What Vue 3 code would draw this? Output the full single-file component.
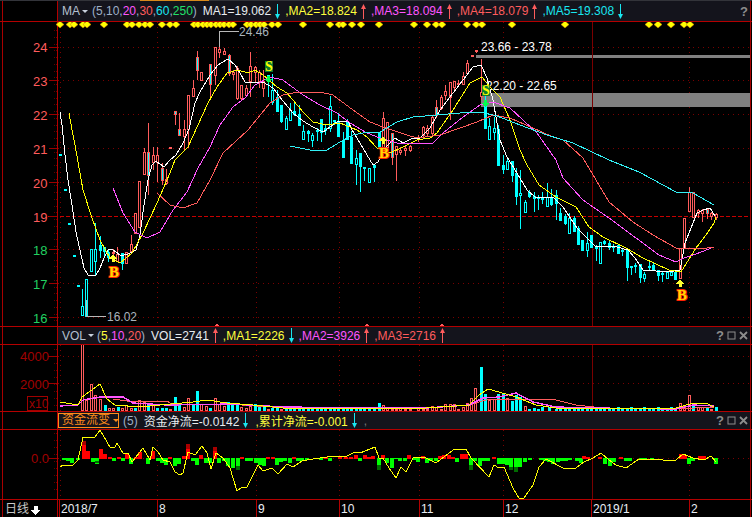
<template>
  <div class="terminal">
    <div class="topstrip"><span class="tab"></span></div>

    <!-- K线 -->
    <div class="head head-main">
      <div class="gutter"></div>
      <div class="head-body">
        <span class="name">MA</span><i class="drop"></i>
        <span class="params">(5,10,<b class="c-pink">20</b>,<b class="c-red">30</b>,<b class="c-cyan">60</b>,<b class="c-green">250</b>)</span>
        <template v-for="m in maItems" :key="m.text">
          <span :class="['val', m.color]">{{ m.text }}</span>
          <svg :class="['arrow', m.up ? 'c-red' : 'c-cyan down']" width="7" height="15" viewBox="0 0 7 15"><path d="M3 15V3H4V15ZM3.5 0L6 5H1Z" /></svg>
        </template>
        <span class="tools"><span class="help">?</span></span>
      </div>
    </div>
    <div class="rule"></div>
    <div class="pane">
      <svg class="chart" width="747" height="304" viewBox="3 22 747 304">
        <line v-for="y in priceGrid" :key="y" class="grid" x1="58" x2="750" :y1="y" :y2="y" />
        <line v-for="x in monthLines" :key="x" class="grid" :x1="x" :x2="x" y1="22" y2="326" />
        <rect class="zone" x="476" y="55" width="274" height="3" />
        <rect class="zone" x="481" y="93" width="269" height="14" />
        <line class="month-solid" x1="592.5" x2="592.5" y1="22" y2="326" />
        <line class="last-price" x1="48" x2="750" y1="216.5" y2="216.5" />
        <line class="axis" x1="57.5" x2="57.5" y1="22" y2="326" />
        <line v-for="y in priceTicks" :key="y" class="tick-minor" x1="54" x2="57" :y1="y" :y2="y" />
        <line v-for="p in priceLabels" :key="p.text" class="tick" x1="49" x2="57" :y1="p.y" :y2="p.y" />
        <text v-for="p in priceLabels" :key="p.text" :class="['axis-text', p.color]" x="33" :y="p.y + 5">{{ p.text }}</text>

        <g v-for="(c, i) in candles" :key="i" :class="['candle', 'k-' + c[5]]">
          <line :x1="c[0] + 0.5" :x2="c[0] + 0.5" :y1="c[1]" :y2="c[4]" />
          <rect :x="c[0] - 0.5" :y="c[2] + 0.5" width="2" :height="Math.max(c[3] - c[2], 1)" />
        </g>

        <polyline class="ma white" :points="ma1" />
        <polyline class="ma yellow" :points="ma2" />
        <polyline class="ma pink" :points="ma3" />
        <polyline class="ma salmon" :points="ma4" />
        <polyline class="ma cyan" :points="ma5" />

        <path v-for="x in diamonds" :key="x" class="diamond" :d="`M${x - 4} 24.5L${x} 21L${x + 4} 24.5L${x} 28Z`" />

        <polyline class="leader" points="219,47 219,31.5 239,31.5" />
        <polyline class="leader" points="86,300 86,316.5 106,316.5" />
        <text class="note" x="239" y="36">24.46</text>
        <text class="note" x="107" y="321">16.02</text>
        <text class="zone-text" x="481" y="51">23.66 - 23.78</text>
        <text class="zone-text" x="486" y="90">22.20 - 22.65</text>

        <g v-for="s in sells" :key="s.x">
          <rect class="sell-bg" :x="s.x - 4" :y="s.y" width="8" height="11" />
          <text class="sell" :x="s.x" :y="s.y + 10" text-anchor="middle">S</text>
          <path class="sell-arrow" :transform="`translate(${s.ax} ${s.ay})`" d="M-1.5 0H1.5V3H4L0 7L-4 3H-1.5Z" />
        </g>
        <g v-for="b in buys" :key="b.x">
          <path class="buy-arrow" :transform="`translate(${b.ax} ${b.ay})`" d="M0 0L4 3.5H1.5V6.5H-1.5V3.5H-4Z" />
          <text class="buy" :x="b.x" :y="b.y" text-anchor="middle">B</text>
        </g>

        <path v-for="x in [217, 367, 442]" :key="x" class="bottom-mark" :d="`M${x - 2} 326L${x} 323L${x + 2} 326Z`" />
      </svg>
    </div>
    <div class="rule"></div>

    <!-- 成交量 -->
    <div class="head">
      <div class="gutter"></div>
      <div class="head-body">
        <span class="name">VOL</span><i class="drop"></i>
        <span class="params vol-params">(<b class="c-yellow">5</b>,<b class="c-pink">10</b>,<b class="c-red">20</b>)</span>
        <template v-for="m in volItems" :key="m.text">
          <span :class="['val', m.color]">{{ m.text }}</span>
          <svg :class="['arrow', m.up ? 'c-red' : 'c-cyan down']" width="7" height="15" viewBox="0 0 7 15"><path d="M3 15V3H4V15ZM3.5 0L6 5H1Z" /></svg>
        </template>
        <span class="tools">
          <span class="help">?</span>
          <svg width="9" height="9" viewBox="0 0 9 9"><rect x="1" y="1" width="7" height="7" class="tool-box" /></svg>
          <svg width="9" height="9" viewBox="0 0 9 9"><path d="M1 1L8 8M8 1L1 8" class="tool-x" /></svg>
        </span>
      </div>
    </div>
    <div class="rule"></div>
    <div class="pane">
      <svg class="chart" width="747" height="66" viewBox="3 345 747 66">
        <line v-for="y in [356, 383]" :key="y" class="grid" x1="58" x2="750" :y1="y + 0.5" :y2="y + 0.5" />
        <line v-for="x in monthLines" :key="x" class="grid" :x1="x" :x2="x" y1="345" y2="411" />
        <line class="month-solid" x1="592.5" x2="592.5" y1="345" y2="411" />
        <line class="axis" x1="57.5" x2="57.5" y1="345" y2="411" />
        <line v-for="y in volTicks" :key="y" class="tick-minor" x1="54" x2="57" :y1="y" :y2="y" />
        <line class="tick" x1="48" x2="57" y1="356.5" y2="356.5" />
        <line class="tick" x1="48" x2="57" y1="383.5" y2="383.5" />
        <text class="axis-text dark" x="20" y="361">4000</text>
        <text class="axis-text dark" x="20" y="389">2000</text>
        <rect class="x10-box" x="27.5" y="396.5" width="20" height="14" />
        <text class="axis-text dark small" x="29" y="408">x10</text>

        <rect v-for="(b, i) in volBars" :key="i" :class="'vol-' + b[2]" :x="b[0] - 0.5" :y="b[1] + 0.5" width="2" :height="410 - b[1]" />

        <polyline class="ma salmon" :points="volMa3" />
        <polyline class="ma pink thick" :points="volMa2" />
        <polyline class="ma yellow" :points="volMa1" />
      </svg>
    </div>
    <div class="rule"></div>

    <!-- 资金流变 -->
    <div class="head">
      <div class="gutter"></div>
      <div class="head-body fund-head">
        <span class="fund-name">资金流变<i class="drop orange"></i></span>
        <span class="params fund-params">(5)</span>
        <span class="val c-white">资金净流=-0.0142</span>
        <svg class="arrow c-cyan down" width="7" height="15" viewBox="0 0 7 15"><path d="M3 15V3H4V15ZM3.5 0L6 5H1Z" /></svg>
        <span class="val c-yellow">,累计净流=-0.001</span>
        <svg class="arrow c-cyan down" width="7" height="15" viewBox="0 0 7 15"><path d="M3 15V3H4V15ZM3.5 0L6 5H1Z" /></svg>
        <span class="val dim">,</span>
        <span class="tools">
          <span class="help">?</span>
          <svg width="9" height="9" viewBox="0 0 9 9"><rect x="1" y="1" width="7" height="7" class="tool-box" /></svg>
          <svg width="9" height="9" viewBox="0 0 9 9"><path d="M1 1L8 8M8 1L1 8" class="tool-x" /></svg>
        </span>
      </div>
    </div>
    <div class="rule"></div>
    <div class="pane">
      <svg class="chart" width="747" height="69" viewBox="3 430 747 69">
        <line class="grid" x1="58" x2="750" y1="458.5" y2="458.5" />
        <line v-for="x in monthLines" :key="x" class="grid" :x1="x" :x2="x" y1="430" y2="499" />
        <line class="month-solid" x1="592.5" x2="592.5" y1="430" y2="499" />
        <line class="axis" x1="57.5" x2="57.5" y1="430" y2="499" />
        <line v-for="y in fundTicks" :key="y" class="tick-minor" x1="54" x2="57" :y1="y" :y2="y" />
        <line class="tick" x1="49" x2="57" y1="458.5" y2="458.5" />
        <text class="axis-text dark" x="31" y="463">0.0</text>
        <rect v-for="(b, i) in fundBars" :key="i" :class="b[1] < 458 ? 'up' : 'dn'" :x="b[0] - 2" :y="Math.min(b[1], 458)" width="4" :height="Math.abs(b[1] - 458) + 1" />
        <rect v-for="(b, i) in fundDark" :key="i" :class="b[1] < 458 ? 'up-dark' : 'dn-dark'" :x="b[0] - 2" :y="b[1]" width="4" :height="b[2]" />
        <polyline class="ma yellow" :points="fundLine" />
      </svg>
    </div>
    <div class="rule"></div>

    <!-- 日期轴 -->
    <div class="pane">
      <svg class="chart" width="747" height="17" viewBox="3 500 747 17">
        <line class="axis" x1="57.5" x2="57.5" y1="500" y2="517" />
        <line v-for="d in dates" :key="d.x" class="axis" :x1="d.x + 0.5" :x2="d.x + 0.5" y1="500" y2="517" />
        <text class="period" x="5" y="513">日线</text>
        <path class="period-arrow" d="M33.5 506H37.5V510H40L35.5 515L31 510H33.5Z" />
        <text v-for="d in dates" :key="d.text" class="date" :x="d.x + 2" y="513">{{ d.text }}</text>
      </svg>
    </div>
  </div>
</template>

<script setup>
const maItems = [
  { text: 'MA1=19.062', color: 'c-white', up: false },
  { text: ',MA2=18.824', color: 'c-yellow', up: true },
  { text: ',MA3=18.094', color: 'c-pink', up: true },
  { text: ',MA4=18.079', color: 'c-red', up: true },
  { text: ',MA5=19.308', color: 'c-cyan', up: false },
]
const volItems = [
  { text: 'VOL=2741', color: 'c-white', up: true },
  { text: ',MA1=2226', color: 'c-yellow', up: false },
  { text: ',MA2=3926', color: 'c-pink', up: true },
  { text: ',MA3=2716', color: 'c-red', up: true },
]

const priceLabels = [
  { text: '24', y: 47, color: 'c-red' },
  { text: '23', y: 80.5, color: 'c-red' },
  { text: '22', y: 114.5, color: 'c-red' },
  { text: '21', y: 148.5, color: 'c-red' },
  { text: '20', y: 182.5, color: 'c-red' },
  { text: '19', y: 216.5, color: 'c-red' },
  { text: '18', y: 249.5, color: 'c-green' },
  { text: '17', y: 283.5, color: 'c-green' },
  { text: '16', y: 317.5, color: 'c-green' },
]
const priceGrid = [47.5, 80.5, 114.5, 148.5, 182.5, 249.5, 283.5, 317.5]
const monthLines = [60.5, 157.5, 256.5, 339.5, 419.5, 503.5, 689.5]
const priceTicks = Array.from({ length: 44 }, (_, i) => 30.5 + i * 6.75)
const volTicks = Array.from({ length: 9 }, (_, i) => 349.5 + i * 7)
const fundTicks = Array.from({ length: 9 }, (_, i) => 433.5 + i * 7)

// 每根K线: x, 上影, 实体顶, 实体底, 下影, 类型 (r红空心 c青实心 h青空心 m红框青心)
const candles = [
  [60, 154, 154, 154, 154, 'c'], [65, 189, 189, 189, 189, 'c'], [69, 223, 223, 223, 223, 'c'], [74, 255, 255, 255, 255, 'c'],
  [78, 285, 285, 285, 285, 'c'], [82, 289, 306, 315, 315, 'h'], [86, 279, 279, 316, 316, 'h'], [91, 249, 249, 271, 272, 'h'],
  [95, 223, 249, 261, 276, 'h'], [100, 236, 245, 250, 258, 'c'], [104, 247, 247, 251, 258, 'c'], [108, 250, 252, 257, 262, 'c'],
  [113, 249, 252, 253, 255, 'r'], [117, 247, 254, 261, 262, 'r'], [122, 253, 253, 263, 270, 'c'], [126, 252, 252, 263, 263, 'r'],
  [131, 235, 244, 251, 252, 'r'], [135, 213, 213, 233, 233, 'r'], [139, 181, 181, 227, 227, 'r'], [144, 148, 152, 174, 174, 'r'],
  [148, 123, 152, 175, 195, 'm'], [153, 147, 155, 162, 170, 'r'], [157, 147, 155, 162, 182, 'r'], [162, 163, 168, 180, 185, 'm'],
  [166, 169, 179, 183, 185, 'r'], [170, 147, 147, 147, 147, 'r'], [175, 111, 111, 114, 125, 'm'], [179, 113, 129, 135, 135, 'm'],
  [184, 120, 129, 136, 150, 'r'], [188, 95, 95, 129, 148, 'r'], [193, 80, 88, 96, 96, 'r'], [197, 51, 57, 70, 80, 'm'],
  [201, 72, 72, 80, 80, 'r'], [210, 64, 64, 84, 97, 'm'], [215, 47, 47, 75, 85, 'r'], [219, 31, 49, 52, 58, 'r'],
  [224, 48, 51, 54, 55, 'r'], [229, 54, 55, 73, 76, 'm'], [233, 70, 72, 74, 80, 'r'], [237, 66, 68, 98, 100, 'r'],
  [241, 85, 85, 98, 100, 'r'], [246, 85, 88, 95, 97, 'r'], [250, 52, 66, 81, 97, 'r'], [255, 66, 67, 72, 82, 'r'],
  [259, 70, 72, 81, 88, 'r'], [263, 70, 81, 88, 97, 'r'], [268, 75, 75, 80, 97, 'c'], [272, 74, 90, 102, 105, 'h'],
  [277, 90, 97, 111, 112, 'c'], [281, 105, 105, 121, 123, 'c'], [286, 116, 118, 129, 129, 'h'], [290, 103, 110, 120, 120, 'h'],
  [294, 102, 111, 114, 116, 'c'], [299, 105, 114, 125, 126, 'c'], [303, 125, 131, 139, 140, 'h'], [308, 130, 131, 133, 142, 'c'],
  [312, 133, 135, 140, 147, 'h'], [317, 128, 130, 130, 141, 'c'], [321, 119, 119, 132, 142, 'c'], [325, 125, 128, 130, 135, 'c'],
  [330, 96, 106, 128, 132, 'h'], [334, 120, 120, 121, 125, 'c'], [338, 113, 121, 136, 137, 'c'], [343, 132, 140, 157, 158, 'c'],
  [347, 119, 122, 139, 140, 'c'], [351, 131, 137, 163, 163, 'c'], [356, 150, 158, 164, 185, 'h'], [360, 153, 153, 166, 192, 'c'],
  [364, 167, 167, 167, 181, 'c'], [369, 168, 168, 182, 183, 'h'], [374, 165, 165, 167, 182, 'c'], [379, 132, 132, 147, 147, 'c'],
  [383, 112, 118, 147, 147, 'r'], [387, 122, 122, 147, 157, 'r'], [392, 133, 133, 157, 165, 'm'], [396, 146, 146, 154, 181, 'r'],
  [400, 147, 150, 152, 155, 'r'], [405, 145, 148, 150, 156, 'r'], [410, 145, 146, 150, 152, 'r'], [418, 135, 137, 139, 142, 'r'],
  [423, 126, 127, 135, 138, 'r'], [427, 125, 128, 133, 136, 'r'], [432, 115, 117, 133, 135, 'r'], [436, 100, 107, 115, 118, 'm'],
  [441, 95, 97, 108, 110, 'r'], [445, 85, 91, 95, 100, 'r'], [450, 82, 82, 97, 120, 'r'], [454, 81, 81, 87, 90, 'r'],
  [458, 80, 83, 83, 85, 'r'], [463, 72, 76, 84, 85, 'r'], [467, 60, 63, 73, 75, 'r'], [472, 55, 55, 55, 55, 'r'],
  [476, 50, 50, 50, 53, 'r'], [481, 59, 92, 96, 100, 'r'], [485, 92, 105, 128, 128, 'c'], [489, 118, 126, 139, 140, 'h'],
  [494, 117, 128, 132, 140, 'h'], [498, 125, 129, 165, 165, 'c'], [503, 155, 165, 169, 174, 'c'], [507, 158, 161, 169, 170, 'h'],
  [512, 161, 161, 175, 182, 'c'], [516, 168, 173, 196, 205, 'c'], [520, 170, 193, 195, 229, 'h'], [525, 200, 202, 212, 213, 'h'],
  [529, 190, 192, 196, 198, 'c'], [534, 192, 196, 198, 212, 'c'], [538, 195, 197, 197, 210, 'c'], [542, 192, 197, 199, 204, 'c'],
  [547, 183, 197, 206, 206, 'h'], [551, 189, 198, 204, 206, 'c'], [556, 190, 195, 203, 220, 'c'], [560, 208, 213, 220, 220, 'c'],
  [565, 214, 216, 223, 225, 'c'], [569, 213, 218, 233, 233, 'h'], [574, 216, 218, 231, 232, 'c'], [578, 226, 228, 244, 244, 'c'],
  [582, 240, 240, 250, 250, 'c'], [587, 232, 243, 250, 257, 'h'], [591, 235, 235, 247, 247, 'c'], [596, 245, 247, 248, 261, 'c'],
  [600, 242, 242, 263, 263, 'h'], [604, 240, 241, 243, 245, 'c'], [609, 241, 243, 247, 250, 'c'], [613, 244, 246, 247, 252, 'c'],
  [618, 244, 245, 253, 254, 'c'], [622, 248, 250, 251, 256, 'c'], [627, 249, 249, 267, 281, 'c'], [631, 266, 266, 266, 275, 'c'],
  [635, 263, 265, 266, 273, 'c'], [640, 264, 264, 277, 283, 'c'], [644, 272, 274, 278, 282, 'h'], [649, 262, 266, 267, 270, 'c'],
  [653, 262, 265, 270, 271, 'c'], [658, 270, 270, 275, 281, 'c'], [662, 272, 273, 274, 282, 'c'], [667, 272, 272, 278, 279, 'h'],
  [671, 270, 272, 275, 276, 'h'], [675, 272, 272, 279, 280, 'c'], [680, 248, 248, 278, 279, 'r'], [684, 218, 218, 248, 249, 'r'],
  [689, 187, 192, 211, 212, 'r'], [693, 192, 192, 217, 218, 'r'], [698, 209, 210, 213, 218, 'r'], [702, 209, 210, 213, 222, 'r'],
  [707, 208, 209, 213, 219, 'm'], [711, 212, 213, 216, 220, 'r'], [716, 213, 214, 217, 220, 'r'],
]

const ma1 = '60,112 62,125 65,155 68,180 72,205 76,232 80,250 84,268 88,275 92,276 96,275 100,268 104,258 108,250 112,249 116,252 120,255 124,255 128,254 132,252 136,250 140,235 144,205 148,180 152,165 156,161 160,164 164,167 170,160 176,155 183,143 189,129 195,103 200,92 210,75 218,65 228,59 235,65 240,73 245,82 253,82 263,82 273,88 283,101 293,113 303,121 313,127 323,132 337,122 348,121 352,130 360,143 367,155 373,165 378,162 385,148 395,138 403,143 413,138 420,138 430,128 440,110 453,93 463,80 473,67 481,65 487,78 493,100 500,140 507,157 517,173 527,190 535,197 553,197 563,207 577,228 587,238 595,246 617,247 628,250 635,258 643,270 668,272 680,270 685,243 697,213 703,210 710,208 715,216'
const ma2 = '69,113 72,130 75,145 83,190 92,218 100,240 110,258 120,263 132,253 143,233 157,203 170,173 175,160 188,147 198,125 208,103 217,87 227,73 238,70 248,73 255,70 263,75 277,87 287,93 303,112 313,122 327,125 340,123 357,130 367,137 377,148 390,153 403,147 417,140 430,138 437,133 453,110 470,83 482,77 490,87 500,97 510,120 520,150 527,165 539,185 556,197 576,207 589,227 603,237 626,248 643,258 669,270 681,272 696,248 706,235 714,223 716,217'
const ma3 = '113,188 123,213 135,232 147,238 160,232 173,210 187,192 198,168 210,147 220,125 233,107 245,98 255,85 270,77 283,80 303,95 320,105 337,113 350,123 367,133 380,138 397,143 413,143 433,143 443,133 463,117 480,105 493,102 510,108 523,120 537,133 556,160 563,178 583,200 609,218 636,238 659,255 676,262 684,258 696,254 714,247'
const ma4 = '157,193 170,205 183,208 197,203 210,180 223,153 248,130 270,103 283,95 298,92 320,92 333,95 353,110 370,122 383,127 407,135 417,138 440,135 460,128 477,122 493,115 510,118 533,128 553,137 563,140 583,158 609,202 633,222 653,235 676,248 701,249 714,247'
const ma5 = '290,146 310,150 327,150 340,142 353,135 363,133 380,132 397,122 413,117 437,115 460,113 480,112 497,116 520,125 547,135 573,143 609,160 639,172 676,192 693,193 714,205'

const diamonds = [181, 209, 222, 248, 262, 313, 380, 396, 416, 436, 449, 487, 510, 527, 582, 595, 608, 620, 634, 648, 660, 673, 686, 699, 740, 753, 767, 780, 793, 816, 833, 910, 991, 1017, 1030, 1057, 1084].map(v => Math.round(v / 3))
  .concat([10, 115, 154, 180, 197, 274, 301, 318, 409, 568, 820, 847, 886, 923, 942].map(v => Math.round(376 + v / 3)))

const sells = [
  { x: 269, y: 61, ax: 268, ay: 76 },
  { x: 486, y: 85, ax: 485, ay: 100 },
]
const buys = [
  { x: 114, y: 277, ax: 113, ay: 255 },
  { x: 384, y: 158, ax: 383, ay: 137 },
  { x: 682, y: 300, ax: 680, ay: 280 },
]

// 成交量柱: x, 顶, 颜色
const volTall = [
  [82, 340, 'r'], [86, 400, 'r'], [91, 384, 'r'], [95, 395, 'r'], [100, 399, 'r'], [105, 405, 'c'], [109, 408, 'r'], [113, 408, 'r'],
  [118, 407, 'c'], [122, 408, 'r'], [126, 405, 'r'], [131, 408, 'r'], [135, 408, 'c'], [139, 400, 'r'], [144, 402, 'r'], [148, 405, 'c'],
  [153, 404, 'r'], [157, 408, 'c'], [162, 408, 'c'], [166, 408, 'c'], [170, 409, 'r'], [175, 397, 'c'], [179, 404, 'c'], [184, 407, 'r'],
  [188, 398, 'r'], [193, 404, 'c'], [197, 391, 'c'], [201, 404, 'r'], [206, 406, 'r'], [210, 408, 'c'], [215, 398, 'r'], [219, 404, 'r'],
  [224, 406, 'r'], [228, 402, 'c'], [232, 405, 'c'], [237, 404, 'c'], [241, 407, 'r'], [246, 408, 'r'], [250, 406, 'r'], [255, 404, 'c'],
  [259, 405, 'c'], [264, 407, 'c'], [268, 409, 'r'], [272, 408, 'c'], [277, 408, 'c'], [281, 409, 'r'], [379, 403, 'c'], [383, 405, 'r'],
  [432, 406, 'r'], [445, 404, 'r'], [450, 404, 'r'], [454, 404, 'r'], [467, 403, 'r'], [471, 398, 'r'], [475, 388, 'r'], [481, 367, 'c'],
  [485, 394, 'c'], [489, 400, 'r'], [494, 399, 'r'], [498, 394, 'c'], [503, 394, 'c'], [507, 398, 'r'], [512, 401, 'c'], [516, 395, 'c'],
  [520, 397, 'c'], [525, 406, 'r'], [534, 408, 'c'], [549, 407, 'c'], [680, 403, 'r'], [684, 406, 'r'], [689, 395, 'r'], [693, 405, 'c'],
  [698, 407, 'r'], [702, 407, 'r'], [707, 407, 'c'], [716, 407, 'c'],
]
const volBars = volTall.concat(
  candles
    .filter(c => !volTall.some(v => Math.abs(v[0] - c[0]) < 3) && c[0] > 81)
    .map((c, i) => [c[0], i % 3 === 0 ? 407 : 409, c[5] === 'r' || c[5] === 'm' ? 'r' : 'c'])
)
const volMa1 = '60,402 78,405 82,397 100,384 107,399 115,405 140,407 160,405 193,402 207,400 227,403 253,405 283,408 376,408 426,408 469,405 479,395 488,389 499,392 516,397 536,405 556,408 676,408 693,403 706,403 714,407'
const volMa2 = '60,406 78,405 83,400 100,397 123,397 133,403 167,405 233,404 283,407 376,408 426,408 469,405 483,398 499,397 516,393 533,402 556,407 593,408 676,409 693,405 714,406'
const volMa3 = '113,399 127,401 167,401 173,405 227,404 287,408 376,408 426,408 469,405 489,399 526,399 556,400 576,405 603,408 676,409 714,407'

// 资金柱: x, y
const fundBars = [
  [64, 459], [68, 460], [72, 462], [78, 459], [84, 445], [88, 451], [93, 461], [97, 463], [101, 449], [105, 454], [110, 457], [114, 460], [119, 457], [123, 460],
  [127, 454], [131, 463], [136, 457], [140, 452], [148, 463], [153, 451], [158, 460], [162, 462], [166, 464], [170, 457], [175, 465], [179, 463], [184, 456],
  [188, 449], [193, 460], [197, 464], [201, 455], [206, 462], [210, 462], [215, 451], [219, 462], [224, 460], [228, 465], [233, 467], [238, 465], [242, 457],
  [247, 460], [251, 460], [256, 462], [260, 464], [264, 465], [268, 457], [273, 457], [277, 464], [281, 461], [285, 460], [290, 462], [294, 457], [298, 460],
  [302, 460], [307, 459], [321, 459], [326, 457], [330, 460], [340, 457], [346, 457], [351, 457], [356, 455], [360, 460], [365, 455], [369, 457], [373, 456],
  [379, 465], [383, 455], [387, 462], [392, 467], [396, 458], [400, 460], [405, 460], [409, 455], [414, 459], [418, 461], [423, 456], [427, 462], [431, 460],
  [436, 460], [440, 456], [444, 455], [449, 455], [453, 457], [457, 461], [462, 454], [466, 454], [471, 465], [475, 460], [480, 465], [484, 460], [488, 460],
  [494, 457], [499, 463], [503, 463], [507, 464], [511, 467], [516, 467], [520, 466], [525, 461], [530, 459], [541, 459], [545, 460], [549, 461], [553, 463],
  [558, 461], [562, 460], [566, 460], [570, 459], [577, 460], [581, 462], [584, 456], [588, 457], [600, 457], [605, 463], [610, 465], [614, 461], [621, 457],
  [626, 460], [630, 460], [641, 459], [645, 459], [652, 459], [681, 454], [685, 455], [689, 463], [693, 460], [700, 456], [704, 456], [716, 463],
]
const fundDark = [[84, 441, 4], [188, 444, 5], [215, 447, 4], [238, 466, 4], [379, 465, 5], [471, 465, 5], [511, 467, 3], [516, 467, 5], [97, 461, 2]]
const fundLine = '60,467 63,465 73,465 78,460 83,437 95,437 100,430 107,442 110,447 115,447 117,443 123,453 128,453 132,462 143,448 150,460 153,447 158,452 163,460 170,462 175,472 180,475 183,473 188,452 195,455 202,446 207,453 211,469 216,453 223,458 230,468 237,491 242,487 247,487 258,465 263,471 272,468 278,474 287,464 293,467 302,461 313,459 327,457 347,456 355,452 360,453 375,447 379,458 383,458 389,468 396,478 401,467 406,472 413,458 419,457 424,457 436,463 453,450 466,449 471,458 489,477 494,465 499,468 504,467 513,488 519,498 524,498 533,485 539,467 546,459 563,468 576,468 584,462 593,458 601,453 609,460 616,465 626,468 639,459 663,460 676,460 683,454 693,458 704,460 711,456 716,462'

const dates = [
  { text: '2018/7', x: 59 }, { text: '8', x: 157 }, { text: '9', x: 256 }, { text: '10', x: 339 },
  { text: '11', x: 419 }, { text: '12', x: 503 }, { text: '2019/1', x: 591 }, { text: '2', x: 689 },
]
</script>

<style scoped>
.terminal {
  width: 752px;
  height: 517px;
  background: #000;
  overflow: hidden;
  font-family: "Liberation Sans", "Noto Sans CJK SC", sans-serif;
  font-size: 12px;
}
.topstrip {
  height: 1px;
  background: #33343a;
}
.tab {
  display: block;
  margin-left: 140px;
  width: 69px;
  height: 1px;
  background: #d88a1c;
}
.rule {
  height: 1px;
  background: #b40000;
}
.head {
  display: flex;
  height: 17px;
}
.head-main {
  height: 20px;
}
.gutter {
  box-sizing: border-box;
  flex: none;
  width: 56px;
  margin-left: 2px;
  border-left: 1px solid #a80000;
  border-right: 1px solid #b40000;
}
.head-body {
  flex: 1;
  display: flex;
  align-items: center;
  margin-right: 1px;
  padding-left: 4px;
  background: #14141c;
  border-right: 1px solid #a80000;
  white-space: nowrap;
}
.name {
  color: #b4c0d0;
}
.drop {
  display: inline-block;
  margin-left: 2px;
  border-left: 3px solid transparent;
  border-right: 3px solid transparent;
  border-top: 3px solid #c8d0dc;
}
.drop.orange {
  border-top-color: #ff8c1a;
  margin-left: 3px;
  vertical-align: 2px;
}
.params {
  margin-left: 4px;
  color: #9fb0c8;
}
.vol-params {
  margin-left: 3px;
}
.params b {
  font-weight: normal;
}
.head-main .params + .val,
.vol-params + .val {
  margin-left: 6px;
}
.arrow {
  flex: none;
  margin: 0 4px 0 3px;
  fill: currentColor;
  overflow: visible;
}
.arrow.down {
  transform: rotate(180deg);
}
.fund-head .arrow {
  margin-right: 6px;
}
.tools {
  display: flex;
  align-items: center;
  gap: 3px;
  margin-left: auto;
  padding-right: 2px;
}
.help {
  color: #8d8d8d;
  font-weight: bold;
  font-size: 13px;
  width: 8px;
}
.tool-box {
  fill: none;
  stroke: #8d8d8d;
}
.tool-x {
  stroke: #8d8d8d;
  stroke-width: 1.8;
  fill: none;
}
.c-white { color: #e8ecf0; }
.c-yellow { color: #ffff3c; }
.c-pink { color: #ff55ff; }
.c-red { color: #ff5c5c; }
.c-cyan { color: #19e6f0; }
.c-green { color: #22e06a; }
.dim { color: #777; }

.fund-head {
  padding-left: 0;
}
.fund-name {
  box-sizing: border-box;
  display: block;
  width: 61px;
  height: 15px;
  line-height: 13px;
  padding-left: 3px;
  border: 1px solid #ff8c1a;
  color: #ff8c1a;
}
.fund-params {
  margin: 0 6px 0 4px;
}

.pane {
  margin: 0 1px 0 2px;
  border-left: 1px solid #a80000;
  border-right: 1px solid #a80000;
}
.chart {
  display: block;
  font-family: "Liberation Sans", "Noto Sans CJK SC", sans-serif;
  font-size: 12px;
  shape-rendering: crispEdges;
}
.grid {
  stroke: #7a0000;
  stroke-dasharray: 1 4;
}
.zone {
  fill: #808080;
}
.month-solid {
  stroke: #7a0000;
}
.last-price {
  stroke: #c80000;
  stroke-dasharray: 4 2;
}
.axis {
  stroke: #b40000;
}
.tick {
  stroke: #9a0000;
}
.tick-minor {
  stroke: #640000;
  stroke-dasharray: 1 1;
}
.axis-text {
  font-size: 13px;
}
.axis-text.c-red { fill: #ff5c5c; }
.axis-text.c-green { fill: #22d060; }
.axis-text.dark { fill: #a00000; }
.axis-text.small { font-size: 12px; }
.x10-box {
  fill: none;
  stroke: #a00000;
}
.candle line {
  stroke: #ff5c5c;
}
.candle rect {
  stroke: #ff5c5c;
  fill: #000;
}
.candle.k-c line,
.candle.k-h line,
.candle.k-c rect,
.candle.k-h rect {
  stroke: #00ffff;
}
.candle.k-c rect,
.candle.k-m rect {
  fill: #00ffff;
}
.ma {
  fill: none;
  stroke-width: 1;
}
.ma.white { stroke: #ffffff; }
.ma.yellow { stroke: #ffff00; }
.ma.pink { stroke: #ff55ff; }
.ma.pink.thick { stroke-width: 1.4; }
.ma.salmon { stroke: #ff5c5c; }
.ma.cyan { stroke: #33f0f5; }
.diamond {
  fill: #ffff00;
  stroke: #d08000;
  stroke-width: 0.5;
  shape-rendering: auto;
}
.leader {
  fill: none;
  stroke: #b8b8b8;
}
.note {
  fill: #a9b4bd;
}
.zone-text {
  fill: #fff;
}
.sell-bg {
  fill: #0c7a2c;
}
.sell {
  fill: #ffff00;
  font-family: "Liberation Serif", serif;
  font-weight: bold;
  font-size: 14px;
}
.sell-arrow {
  fill: #00ff50;
}
.buy-arrow {
  fill: #ffff30;
}
.buy {
  fill: #ffd800;
  stroke: #ff2000;
  stroke-width: 1.8;
  paint-order: stroke;
  font-family: "Liberation Serif", serif;
  font-weight: bold;
  font-size: 15px;
}
.bottom-mark {
  fill: #ff5c5c;
}
.vol-r {
  fill: #000;
  stroke: #ff5c5c;
}
.vol-c {
  fill: #00ffff;
  stroke: #00ffff;
}
.up { fill: #ff0000; }
.dn { fill: #00ff00; }
.up-dark { fill: #a80000; }
.dn-dark { fill: #006a00; }
.period {
  fill: #c8c8c8;
}
.period-arrow {
  fill: #fff;
}
.date {
  fill: #e8eef4;
}
</style>
